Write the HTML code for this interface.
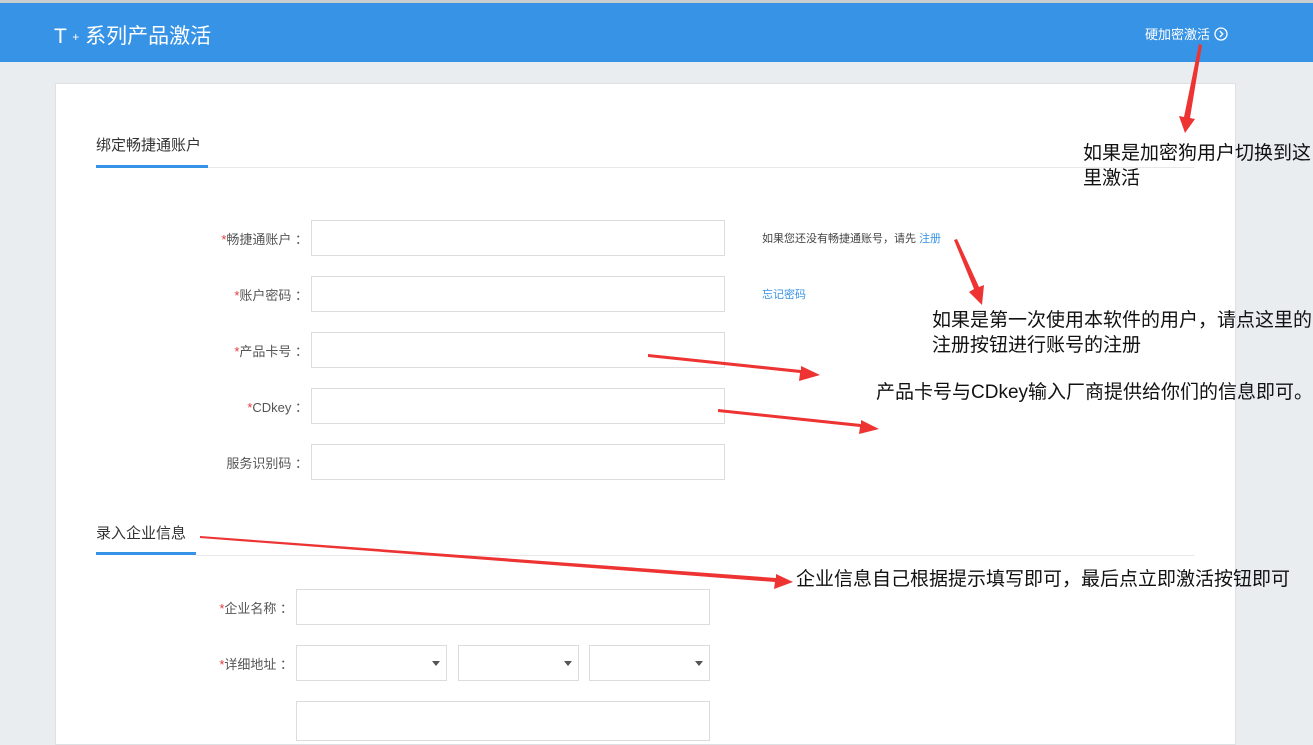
<!DOCTYPE html><html><head><meta charset="utf-8"><style>
body{margin:0;width:1313px;height:729px;overflow:hidden;background:#e9edf0;font-family:"Liberation Sans","Noto Sans CJK SC",sans-serif;position:relative}
.top{position:absolute;left:0;top:0;width:1313px;height:3px;background:#c9cdd0}
.hd{position:absolute;left:0;top:3px;width:1313px;height:59px;background:#3793e6;color:#fff}
.hd .t{position:absolute;left:54px;top:17px;font-size:21px}
.hd .r{position:absolute;left:1145px;top:21px;font-size:13px}
.card{position:absolute;left:55px;top:83px;width:1179px;height:660px;background:#fff;border:1px solid #dde1e4}
.a{position:absolute}
.sec{position:absolute;font-size:15px;color:#333}
.ul{position:absolute;height:3px;background:#3793e6}
.ln{position:absolute;height:1px;background:#e8e8e8}
.lb{position:absolute;font-size:13px;color:#555;text-align:right;width:200px}
.lb i{color:#e4393c;font-style:normal}
.in{position:absolute;border:1px solid #dcdcdc;background:#fff;box-sizing:border-box;height:36px}
.sel::after{content:"";position:absolute;right:6px;top:15px;border:4px solid transparent;border-top:5px solid #555}
.note{position:absolute;font-size:19px;color:#111;line-height:25px}
</style></head><body>
<div class="top"></div>
<div class="hd"><div class="t">T <span style="font-size:12px;vertical-align:2px">+</span> 系列产品激活</div>
<div class="r">硬加密激活 <svg width="14" height="14" viewBox="0 0 14 14" style="vertical-align:-2px"><circle cx="7" cy="7" r="6" fill="none" stroke="#fff" stroke-width="1.3"/><path d="M5.8 4l3 3-3 3" fill="none" stroke="#fff" stroke-width="1.3"/></svg></div></div>
<div class="card"></div>
<div class="sec" style="left:96px;top:134px">绑定畅捷通账户</div>
<div class="ul" style="left:96px;top:165px;width:112px"></div>
<div class="ln" style="left:208px;top:167px;width:986px"></div>
<div class="lb" style="left:108px;top:229px"><i>*</i>畅捷通账户 ：</div>
<div class="in" style="left:311px;top:220px;width:414px"></div>
<div class="lb" style="left:108px;top:285px"><i>*</i>账户密码 ：</div>
<div class="in" style="left:311px;top:276px;width:414px"></div>
<div class="lb" style="left:108px;top:341px"><i>*</i>产品卡号 ：</div>
<div class="in" style="left:311px;top:332px;width:414px"></div>
<div class="lb" style="left:108px;top:397px"><i>*</i>CDkey ：</div>
<div class="in" style="left:311px;top:388px;width:414px"></div>
<div class="lb" style="left:108px;top:453px">服务识别码 ：</div>
<div class="in" style="left:311px;top:444px;width:414px"></div>
<div class="a" style="left:762px;top:230px;font-size:11px;color:#444">如果您还没有畅捷通账号，请先 <span style="color:#3793e6">注册</span></div>
<div class="a" style="left:762px;top:286px;font-size:11px;color:#3793e6">忘记密码</div>
<div class="sec" style="left:96px;top:522px">录入企业信息</div>
<div class="ul" style="left:96px;top:552px;width:100px"></div>
<div class="ln" style="left:196px;top:555px;width:998px"></div>
<div class="lb" style="left:93px;top:598px"><i>*</i>企业名称 ：</div>
<div class="in" style="left:296px;top:589px;width:414px"></div>
<div class="lb" style="left:93px;top:654px"><i>*</i>详细地址 ：</div>
<div class="in sel" style="left:296px;top:645px;width:151px"></div>
<div class="in sel" style="left:458px;top:645px;width:121px"></div>
<div class="in sel" style="left:589px;top:645px;width:121px"></div>
<div class="in" style="left:296px;top:701px;width:414px;height:40px"></div>
<div class="note" style="left:1083px;top:141px;width:230px">如果是加密狗用户切换到这里激活</div>
<div class="note" style="left:932px;top:308px;white-space:nowrap">如果是第一次使用本软件的用户，请点这里的<br>注册按钮进行账号的注册</div>
<div class="note" style="left:876px;top:380px;white-space:nowrap">产品卡号与CDkey输入厂商提供给你们的信息即可。</div>
<div class="note" style="left:796px;top:567px;white-space:nowrap">企业信息自己根据提示填写即可，最后点立即激活按钮即可</div>
<svg class="a" style="left:0;top:0" width="1313" height="729">
<g fill="#ee3333">
<polygon points="1199,44 1202,45 1190,118 1195,119 1185,133 1179,116 1184,117"/>
<polygon points="954,240 957,239 979,287 984,285 982,305 969,292 974,289"/>
<polygon points="648,354 648,357 800,373 799,381 820,375 801,366 801,370"/>
<polygon points="718,409 718,412 860,427 859,434 879,429 861,420 861,424"/>
<polygon points="200,536 200,538 775,582 774,589 793,582 776,574 776,578"/>
</g></svg>
</body></html>
